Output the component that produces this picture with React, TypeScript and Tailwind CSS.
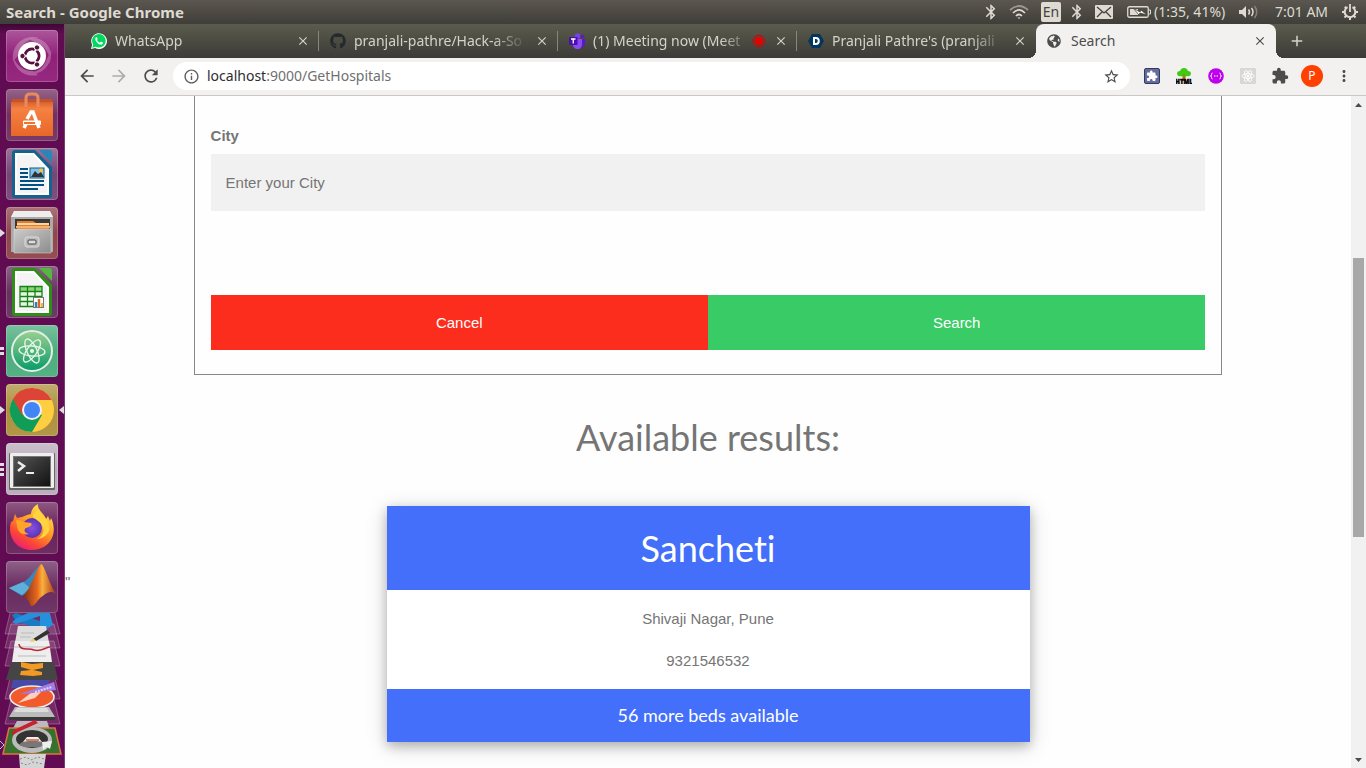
import type { ReactNode } from 'react'
import { FaGithub, FaGlobeAmericas } from 'react-icons/fa'
import {
  MdAdd,
  MdArrowBack,
  MdArrowForward,
  MdBluetooth,
  MdClose,
  MdExtension,
  MdInfoOutline,
  MdMoreVert,
  MdRefresh,
  MdStarBorder,
} from 'react-icons/md'

/* ---------- Tab favicons ---------- */

function WhatsAppIcon() {
  return (
    <svg width="16" height="16" viewBox="0 0 16 16">
      <path d="M0 16l1.1-4.2A7.9 7.9 0 1 1 4.2 15z" fill="#fff" />
      <path d="M1.3 14.7l.9-3.2A6.8 6.8 0 1 1 4.7 13.8z" fill="#00d95f" />
      <path d="M5.4 4.1c-.5.1-1.1.9-1.1 1.8 0 2.4 3.3 5.7 5.8 5.7 1 0 1.8-.6 1.9-1.500l-.1-.5-1.700-.9-.4.1-.8.9c-1.200-.3-2.500-1.500-3-2.700l.6-.8V5.900l-.7-1.700z" fill="#fff" />
    </svg>
  )
}

function TeamsIcon() {
  return (
    <svg width="16" height="16" viewBox="0 0 16 16">
      <circle cx="8.500" cy="3" r="2.700" fill="#7b3ff2" />
      <circle cx="13.500" cy="3.500" r="1.800" fill="#5b18c9" />
      <path d="M11 6h5v5a3 3 0 0 1-4 3z" fill="#5b18c9" />
      <path d="M4 6h9v5.500A4.500 4.500 0 0 1 4 12z" fill="#8a4af5" />
      <rect y="4" width="8.500" height="8" rx="1" fill="#4b0fb0" />
      <path d="M2 6h4.500M4.250 6v4.500" stroke="#fff" strokeWidth="1.300" />
    </svg>
  )
}

function DevfolioIcon() {
  return (
    <svg width="16" height="16" viewBox="0 0 16 16">
      <path d="M4 1h8l4 7-4 7H4L0 8z" fill="#03365c" />
      <path d="M6 5h1.800a3 3 0 0 1 0 6H6z" fill="none" stroke="#fff" strokeWidth="2" />
    </svg>
  )
}

function RecordingDot() {
  return (
    <svg width="14" height="14" viewBox="0 0 14 14" className="shrink-0">
      <circle cx="7" cy="7" r="4.300" fill="#e60000" />
      <circle cx="7" cy="7" r="5.800" fill="none" stroke="#d40000" strokeWidth="1" />
    </svg>
  )
}

const TABS: { title: string; icon: ReactNode; recording?: boolean }[] = [
  { title: 'WhatsApp', icon: <WhatsAppIcon /> },
  { title: 'pranjali-pathre/Hack-a-So', icon: <FaGithub size={16} color="#24292e" /> },
  { title: '(1) Meeting now (Meet', icon: <TeamsIcon />, recording: true },
  { title: "Pranjali Pathre's (pranjali", icon: <DevfolioIcon /> },
]

/* ---------- Launcher icons ---------- */

function DashIcon() {
  return (
    <svg width="52" height="52" viewBox="0 0 52 52">
      <path d="M7 31C5 13 20 4 33 8c-10-1-20 7-21 18M20 8c18-4 30 12 23 26 2-10-4-19-14-22M45 20c2 18-14 29-29 22 10 3 20-2 24-11M32 45C18 48 7 38 7 26c3 9 10 15 20 15" fill="#fff" opacity=".25" />
      <circle cx="26" cy="27" r="14" fill="#4a0d40" opacity=".4" />
      <circle cx="26" cy="26" r="14" fill="#fff" />
      <circle cx="26" cy="26" r="7" fill="none" stroke="#57113f" strokeWidth="3" />
      <path d="M26 26L15 26M26 26l6-10M26 26l6 10" stroke="#fff" strokeWidth="1.500" />
      <circle cx="26" cy="26" r="5.500" fill="#fff" />
      <g fill="#57113f" stroke="#fff">
        <circle cx="16.500" cy="26" r="2.700" />
        <circle cx="31" cy="17.500" r="2.700" />
        <circle cx="31" cy="34.500" r="2.700" />
      </g>
    </svg>
  )
}

function SoftwareIcon() {
  return (
    <svg width="52" height="52" viewBox="0 0 52 52">
      <defs>
        <linearGradient id="bag" x2="0" y2="1">
          <stop stopColor="#d7612f" />
          <stop offset=".2" stopColor="#f58142" />
          <stop offset="1" stopColor="#e96727" />
        </linearGradient>
      </defs>
      <path d="M6 10h40l1 4H5z" fill="#c65227" />
      <path d="M5 13h42v34H5z" fill="url(#bag)" />
      <path d="M20 18V9q0-4 4-4h4q4 0 4 4v9" fill="none" stroke="#e98a5c" strokeWidth="3" />
      <path d="M21 30l4-7h2l6 16M20 35l-2 4" fill="none" stroke="#fff" strokeWidth="3.500" />
      <rect x="17" y="31.500" width="18" height="4.500" rx="1" fill="#fff" />
      <rect x="18" y="33" width="11" height="2" fill="#ee7431" />
    </svg>
  )
}

function DocumentIcon({ edge, light, children }: { edge: string; light: string; children: ReactNode }) {
  return (
    <svg width="52" height="52" viewBox="0 0 52 52">
      <path d="M9 2h20l17 17v28q0 3-3 3H9q-3 0-3-3V5q0-3 3-3z" fill={edge} />
      <path d="M9 5h19l15 16v26H9z" fill="#fff" />
      <path d="M11 7h16l14 15v23H11z" fill="#f4f4f4" />
      <path d="M33 2h10q3 0 3 3v10z" fill={light} />
      {children}
    </svg>
  )
}

function WriterIcon() {
  return (
    <DocumentIcon edge="#17618f" light="#2b86b8">
      <path d="M14 21h8M14 25h8M14 29h8M14 33h24M14 37h24M14 41h18" stroke="#005083" strokeWidth="2" />
      <rect x="24" y="20" width="14" height="10" fill="#83c3eb" stroke="#115987" />
      <circle cx="35" cy="22.500" r="2" fill="#f4c435" />
      <path d="M25 29l4-6 3 3 3-2 3 5z" fill="#333" />
    </DocumentIcon>
  )
}

function CalcIcon() {
  return (
    <DocumentIcon edge="#2f8d18" light="#55b83e">
      <path d="M14 20h22v21H14z" fill="#e9f8e3" />
      <path d="M14 20h22v6H14z" fill="#8dd477" />
      <path d="M14 20.500h22v20H14zM14 25.500h22M14 30.500h22M14 35.500h22M21.500 20v21M29 20v21" fill="none" stroke="#15821a" strokeWidth="1.300" />
      <rect x="27.500" y="31.500" width="10" height="10" fill="#fff" stroke="#777" />
      <path d="M30 41v-5" stroke="#2a82bd" strokeWidth="2.500" />
      <path d="M33 41v-8" stroke="#df6229" strokeWidth="2.500" />
      <path d="M36 41v-4" stroke="#eebb2b" strokeWidth="2" />
    </DocumentIcon>
  )
}

function FilesIcon() {
  return (
    <svg width="52" height="52" viewBox="0 0 52 52">
      <defs>
        <linearGradient id="cabinet" x2="1" y2="1">
          <stop stopColor="#ccc" />
          <stop offset="1" stopColor="#8c8c8c" />
        </linearGradient>
      </defs>
      <path d="M8 4h36l3 6v35H5V10z" fill="#aaa" />
      <path d="M8 4h36l3 6H5z" fill="#eee" />
      <path d="M9 12h35v12H9z" fill="#3d3833" />
      <path d="M11 14h16l3 2h13v7H11z" fill="#e67b25" />
      <path d="M11 17h32" stroke="#fff2d5" strokeWidth="1.500" />
      <path d="M10 20h34" stroke="#f4b16d" strokeWidth="2" />
      <path d="M8 22h37v24H8z" fill="url(#cabinet)" stroke="#ddd" strokeWidth=".5" />
      <rect x="19" y="30" width="14" height="10" rx="2" fill="#bbb" stroke="#ddd" />
      <rect x="22" y="33" width="8" height="4" rx="1" fill="#ddd" stroke="#444" />
    </svg>
  )
}

function AtomIcon() {
  return (
    <svg width="52" height="52" viewBox="0 0 52 52">
      <defs>
        <linearGradient id="atom" x2="0" y2="1">
          <stop stopColor="#9bcf91" />
          <stop offset="1" stopColor="#089b68" />
        </linearGradient>
      </defs>
      <circle cx="26" cy="26" r="20" fill="url(#atom)" stroke="#e0eee5" strokeWidth="2" />
      <g fill="none" stroke="#e8f6e9" strokeWidth="1.300">
        <ellipse cx="26" cy="26" rx="5" ry="13" transform="rotate(-25 26 26)" />
        <ellipse cx="26" cy="26" rx="5" ry="13" transform="rotate(35 26 26)" />
        <ellipse cx="26" cy="26" rx="5" ry="13" transform="rotate(95 26 26)" />
      </g>
      <circle cx="26" cy="26" r="2" fill="#e8f6e9" />
    </svg>
  )
}

function ChromeIcon() {
  return (
    <svg width="52" height="52" viewBox="0 0 52 52">
      <circle cx="26" cy="26" r="22" fill="#ffcd40" />
      <path d="M26 26L7 14.800A22 22 0 0 0 26 48L36 31z" fill="#0f9d58" />
      <path d="M26 26L16 31 7 14.800A22 22 0 0 1 45.500 16H26z" fill="#db4437" />
      <circle cx="26" cy="26" r="10" fill="#f1f1f1" />
      <circle cx="26" cy="26" r="8" fill="#4285f4" />
    </svg>
  )
}

function TerminalIcon() {
  return (
    <svg width="52" height="52" viewBox="0 0 52 52">
      <defs>
        <linearGradient id="screen" x2="1" y2="1">
          <stop stopColor="#555" />
          <stop offset="1" stopColor="#111" />
        </linearGradient>
      </defs>
      <rect x="3" y="10" width="46" height="37" rx="1" fill="#666" />
      <rect x="4" y="10" width="44" height="35" rx="1" fill="#eee" />
      <rect x="7.500" y="13.500" width="37" height="30" fill="url(#screen)" stroke="#777" />
      <path d="M12 19l6 4-6 5" fill="none" stroke="#eee" strokeWidth="2.500" />
      <path d="M20 30h8" stroke="#eee" strokeWidth="2" />
    </svg>
  )
}

function FirefoxIcon() {
  return (
    <svg width="52" height="52" viewBox="0 0 52 52">
      <defs>
        <linearGradient id="fire" x1=".8" y1="0" x2=".2" y2="1">
          <stop stopColor="#ffef54" />
          <stop offset=".45" stopColor="#ff9a25" />
          <stop offset=".75" stopColor="#fb4637" />
          <stop offset="1" stopColor="#ea1683" />
        </linearGradient>
        <radialGradient id="globe">
          <stop stopColor="#8750e8" />
          <stop offset="1" stopColor="#5b34ae" />
        </radialGradient>
      </defs>
      <path d="M9 12l2 4 5-1 5-2 4-1c0-4 3-8 7-10-1 6 6 9 8 15l2-3 2 5 1-3c8 16-2 32-19 32S1 33 5 20l2-1z" fill="url(#fire)" />
      <circle cx="26" cy="26" r="10" fill="url(#globe)" />
      <path d="M10 18c5 0 6 1 8 2l7 1c2 2-1 4-5 5-3 2-1 5 3 6-7 2-12-3-12-8z" fill="#ffa52a" />
      <path d="M27 12c-2 5 8 6 10 13 2 6-2 10-6 12 12-1 16-12 9-20-2-4-7-6-7-10z" fill="#ffd43e" />
    </svg>
  )
}

function MatlabIcon() {
  return (
    <svg width="52" height="52" viewBox="0 0 52 52">
      <defs>
        <linearGradient id="peak">
          <stop stopColor="#762515" />
          <stop offset=".45" stopColor="#e8691f" />
          <stop offset=".6" stopColor="#f9b13c" />
          <stop offset="1" stopColor="#a6321b" />
        </linearGradient>
      </defs>
      <path d="M3 27l14-6c6-2 10-11 16-16l-9 26-8 4z" fill="#3986bc" />
      <path d="M3 27l13 7 8-7-7-6z" fill="#5eb0da" />
      <path d="M35 3c3 0 8 19 15 30-6-5-11 0-16 4-3 3-5 8-9 8-2-5-5-9-9-10 8-3 14-28 19-32z" fill="url(#peak)" />
    </svg>
  )
}

/* Folded icons at the bottom of the launcher */
function FoldedStack() {
  return (
    <svg width="64" height="160" viewBox="0 0 64 160" className="block">
      <g fill="#fff" fillOpacity=".12" stroke="#fff" strokeOpacity=".25">
        <path d="M11 1h43l6 25H5z" />
        <path d="M11 16h43l6 24H5z" />
        <path d="M11 33h43l6 25H5z" />
        <path d="M11 66h43l6 25H5z" />
        <path d="M11 91h43l6 25H5z" />
      </g>
      <path d="M12 7l4-2 27 9 9 1-7 6-9-1-20-7z" fill="#187bc3" />
      <path d="M37 1l12 1 4 15-10 6-3-5V8L16 16l-4-2 5-4z" fill="#2590db" />
      <path d="M18 18h28l4 22H14z" fill="#ddd" />
      <path d="M15 33h34l3 21H12z" fill="#eee" />
      <path d="M14 39h36" stroke="#bbb" />
      <path d="M21 25h13M20 29h11M18 48h28" stroke="#bbb" />
      <path d="M19 36c1 8 10 3 15 6 7 2 12-3 16-3" fill="none" stroke="#bf2534" strokeWidth="1.500" />
      <path d="M33 31l14-9 3 3-14 8z" fill="#333" />
      <path d="M30 34l3-4 3 3z" fill="#e2d16a" />
      <path d="M11 54h43l4 18H6z" fill="#454545" />
      <path d="M21 54l11 2 11-1v5l-10 2 9 2v3l-9 1-13-1 1-4 10-1-10-3z" fill="#f39a24" />
      <path d="M13 72h37l-3 8H11z" fill="#474aa7" />
      <ellipse cx="32" cy="89" rx="22" ry="11" fill="#f15a2b" stroke="#eee" strokeWidth="1.500" />
      <path d="M18 95l14-11 16-7-13 13z" fill="#ffd1bc" />
      <path d="M20 86l34-12 2 8-31 4z" fill="#a07de0" />
      <path d="M35 84l17-5" stroke="#e2d5ff" strokeWidth="2" strokeDasharray="2 1" />
      <path d="M15 99h34l6 10H9z" fill="#bbb" />
      <path d="M17 100h30l2 4H14z" fill="#ddd" />
      <path d="M9 109h46v3H9z" fill="#383838" />
      <path d="M17 113h30l3 9H12z" fill="#bbb" />
      <path d="M9 120h46l6 26H3z" fill="#37712f" stroke="#df7140" strokeWidth="1.500" />
      <ellipse cx="32" cy="132" rx="20" ry="13" fill="#bbb" />
      <ellipse cx="32" cy="131" rx="16" ry="9" fill="#333" />
      <path d="M19 137a14 8 0 0 1 26 0l-6 2H24z" fill="#777" />
      <path d="M23 134l4-5h11l4 5-5-1h-9z" fill="#eee" />
      <path d="M26 132h13" stroke="#d65a28" strokeWidth="1.500" />
      <path d="M42 134l10-1-2 8-3-2-4 3z" fill="#eee" />
      <path d="M11 125l5-4 19-9 3 3-20 9-5 3z" fill="#c4222c" />
      <path d="M19 146h27l-2 14H20z" fill="#d5d5d5" />
      <path d="M20 151l6-2 5 3 7-3 6 2M21 155l6 2 6-3 10 2" fill="none" stroke="#888" strokeDasharray="2 2" />
      <path d="M0 133l4 4-4 4" fill="none" stroke="#9dcfee" />
    </svg>
  )
}

const LAUNCHER = [
  { name: 'Search your computer', icon: <DashIcon />, tile: 'bg-[#911f79]', windows: 0 },
  { name: 'Ubuntu Software', icon: <SoftwareIcon />, tile: 'bg-[#713061]', windows: 0 },
  { name: 'LibreOffice Writer', icon: <WriterIcon />, tile: 'bg-[#754777]', windows: 0 },
  { name: 'Files', icon: <FilesIcon />, tile: 'bg-[#8f454b]', windows: 1 },
  { name: 'LibreOffice Calc', icon: <CalcIcon />, tile: 'bg-[#65315f]', windows: 0 },
  { name: 'Atom', icon: <AtomIcon />, tile: 'bg-[#4dac7e]', windows: 2 },
  { name: 'Google Chrome', icon: <ChromeIcon />, tile: 'bg-[#ae913e]', windows: 1, focused: true },
  { name: 'Terminal', icon: <TerminalIcon />, tile: 'bg-[#b8abb9]', windows: 3 },
  { name: 'Firefox', icon: <FirefoxIcon />, tile: 'bg-[#692259]', windows: 0 },
  { name: 'MATLAB', icon: <MatlabIcon />, tile: 'bg-[#692c60]', windows: 0 },
]

function WindowMarks({ count }: { count: number }) {
  return (
    <svg width="5" height="14" viewBox="0 0 5 14" className="absolute top-[19px] left-0" fill="#ddd">
      {count === 1 && <path d="M0 3l5 4-5 4z" />}
      {count === 2 && <path d="M0 3h4v3H0zM0 8h4v3H0z" />}
      {count === 3 && <path d="M0 1h4v3H0zM0 6h4v3H0zM0 11h4v3H0z" />}
    </svg>
  )
}

function Launcher() {
  return (
    <nav className="w-[65px] shrink-0 overflow-hidden border-r border-[#7d3b72] bg-[#610c52] bg-linear-to-b from-[#3e0735] to-[#610c52] to-[10px] pt-[6px]">
      <ul className="flex flex-col gap-[7px]">
        {LAUNCHER.map((app) => (
          <li key={app.name} className="relative flex justify-center">
            <WindowMarks count={app.windows} />
            <button
              aria-label={app.name}
              className={`size-[52px] rounded-sm bg-linear-to-b from-white/25 via-white/0 to-white/5 shadow-[inset_0_0_0_1px_rgba(255,255,255,0.2)] ${app.tile}`}
            >
              {app.icon}
            </button>
            {app.focused && (
              <svg width="5" height="8" viewBox="0 0 5 8" className="absolute top-[22px] right-0" fill="#ddd">
                <path d="M5 0L0 4l5 4z" />
              </svg>
            )}
          </li>
        ))}
      </ul>
      <div className="-mt-[5px]">
        <FoldedStack />
      </div>
    </nav>
  )
}

/* ---------- Top panel ---------- */

function WifiIcon() {
  return (
    <svg width="20" height="16" viewBox="0 0 20 16" fill="none" strokeWidth="1.700">
      <path d="M1 6q9-8 18 0" stroke="#9b9990" />
      <path d="M4 9q6-6 12 0" stroke="#dfdbd2" />
      <path d="M7 12q3-3 6 0" stroke="#dfdbd2" />
      <path d="M8.500 13.500h3L10 15z" fill="#dfdbd2" />
    </svg>
  )
}

function MailIcon() {
  return (
    <svg width="18" height="14" viewBox="0 0 18 14">
      <rect width="18" height="14" rx="1" fill="#dfdbd2" />
      <path d="M2 2l7 6 7-6M2 12l5-5M16 12l-5-5" fill="none" stroke="#45433e" strokeWidth="1.300" />
    </svg>
  )
}

function BatteryIcon() {
  return (
    <svg width="24" height="14" viewBox="0 0 24 14">
      <rect x=".75" y="1.750" width="20.500" height="10.500" rx="1.500" fill="none" stroke="#dfdbd2" strokeWidth="1.300" />
      <rect x="3" y="4" width="8" height="6" fill="#dfdbd2" />
      <path d="M22 5h1.500v4H22" fill="none" stroke="#dfdbd2" />
      <path d="M6 3l7 4 1-2 6 5-7-2-1 2z" fill="#fff" stroke="#45433e" strokeWidth=".8" />
    </svg>
  )
}

function VolumeIcon() {
  return (
    <svg width="20" height="14" viewBox="0 0 20 14" fill="none" strokeWidth="1.500">
      <path d="M0 5h3l4-4v12L3 9H0z" fill="#dfdbd2" />
      <path d="M9.500 4.500q2 2.500 0 5M12.500 3q3 4 0 8" stroke="#dfdbd2" />
      <path d="M15.500 1q4.500 6 0 12" stroke="#85837a" />
    </svg>
  )
}

function GearIcon() {
  return (
    <svg width="18" height="18" viewBox="0 0 18 18" fill="none" stroke="#dfdbd2">
      <path d="M6.500 4.200a5.300 5.300 0 1 0 5 0" strokeWidth="2" />
      <path d="M9 1v8" strokeWidth="1.800" />
      <path d="M3.800 3.800l1.500 1.500M14.200 3.800l-1.500 1.500M1 9h3M14 9h3M3.500 14.500l2-2M14.500 14.500l-2-2M9 14v3" strokeWidth="2" />
    </svg>
  )
}

function TopPanel() {
  return (
    <header className="flex h-6 shrink-0 items-center justify-between bg-linear-to-b from-[#5b5750] to-[#403e39] pr-[7px] pl-[6px] text-[14px] leading-[22px] text-[#dfdbd2]">
      <span className="text-[15px] font-bold">Search - Google Chrome</span>
      <div className="flex items-center">
        <MdBluetooth size={18} className="mr-[9px]" />
        <WifiIcon />
        <span className="mr-[7px] ml-3 flex h-5 w-5 items-center justify-center rounded-xs bg-[#dfdbd2] text-[#45433e]">En</span>
        <MdBluetooth size={18} className="mr-[9px]" />
        <MailIcon />
        <span className="ml-[14px] flex w-[100px] items-center gap-[3px] whitespace-nowrap">
          <BatteryIcon />
          (1:35, 41%)
        </span>
        <span className="ml-3 w-[36px]">
          <VolumeIcon />
        </span>
        <span className="w-[66px] whitespace-nowrap">7:01 AM</span>
        <GearIcon />
      </div>
    </header>
  )
}

/* ---------- Browser chrome ---------- */

function TabStrip() {
  return (
    <div className="flex h-[34px] shrink-0 bg-linear-to-b from-[#5b5c4e] to-[#3c3b37] pl-[15px] text-[14px] leading-5 text-[#d5d3c9]">
      {TABS.map((tab, i) => (
        <div key={tab.title} className="flex w-[239px] min-w-0 items-center pl-[11px]">
          <span className="mr-2 shrink-0">{tab.icon}</span>
          <span className="min-w-0 flex-1 overflow-hidden mask-r-from-80% whitespace-nowrap">{tab.title}</span>
          {tab.recording && <RecordingDot />}
          <button aria-label={`Close ${tab.title}`} className="ml-2 shrink-0">
            <MdClose size={14} />
          </button>
          <span className={`ml-2 h-5 w-px shrink-0 ${i < 3 ? 'bg-[#86867a]' : ''}`} />
        </div>
      ))}
      <div className="relative flex w-[240px] min-w-0 items-center rounded-t-lg bg-[#f2f1f0] pr-[9px] pl-[11px] text-[#4c4c4c]">
        <span className="absolute bottom-0 -left-2 size-2 bg-[radial-gradient(circle_at_0_0,transparent_8px,#f2f1f0_8px)]" />
        <span className="absolute -right-2 bottom-0 size-2 bg-[radial-gradient(circle_at_100%_0,transparent_8px,#f2f1f0_8px)]" />
        <FaGlobeAmericas size={14} className="mr-[10px] shrink-0" />
        <span className="flex-1">Search</span>
        <button aria-label="Close Search">
          <MdClose size={14} />
        </button>
      </div>
      <button aria-label="New tab" className="ml-3">
        <MdAdd size={18} />
      </button>
    </div>
  )
}

function PuzzleBadge() {
  return (
    <span className="flex size-4 items-center justify-center rounded-xs border border-[#323965] bg-[#666d9a] text-white">
      <MdExtension size={12} />
    </span>
  )
}

function HtmlTreeIcon() {
  return (
    <svg width="16" height="16" viewBox="0 0 16 16">
      <path d="M7 7h2l1 6H6z" fill="#a55b18" />
      <path d="M1 6q0-3 3-3 1-3 4-3t4 3q3 0 3 3-1 3-4 2-3 2-6 0-3 1-4-2z" fill="#3ecb12" />
      <path d="M8 6v6" stroke="#c66a17" strokeWidth="1.500" />
      <text x="8" y="16" textAnchor="middle" fontSize="6" fontWeight="900" fill="#000" stroke="#000" strokeWidth=".4">
        HTML
      </text>
    </svg>
  )
}

function BracesIcon() {
  return (
    <svg width="16" height="16" viewBox="0 0 16 16">
      <circle cx="8" cy="8" r="7.800" fill="#bd00ed" />
      <path d="M4.500 5q-1 0-1 1.500T2.500 8q1 0 1 1.500t1 1.500M11.500 5q1 0 1 1.500t1 1.500q-1 0-1 1.500t-1 1.500M6 8h1M9 8h1M7.500 8h1" fill="none" stroke="#fff" />
    </svg>
  )
}

function ReactBadge() {
  return (
    <svg width="16" height="16" viewBox="0 0 16 16">
      <rect width="16" height="16" rx="1" fill="#d7d7d6" />
      <g fill="none" stroke="#fff" strokeWidth=".9">
        <ellipse cx="8" cy="8" rx="6" ry="2.300" />
        <ellipse cx="8" cy="8" rx="6" ry="2.300" transform="rotate(60 8 8)" />
        <ellipse cx="8" cy="8" rx="6" ry="2.300" transform="rotate(120 8 8)" />
      </g>
      <circle cx="8" cy="8" r="1.200" fill="#fff" />
    </svg>
  )
}

function ToolButton({ label, children }: { label: string; children: ReactNode }) {
  return (
    <button aria-label={label} className="flex size-8 shrink-0 items-center justify-center">
      {children}
    </button>
  )
}

function Toolbar() {
  return (
    <div className="flex h-[38px] shrink-0 items-center border-b border-[#cbc9c7] bg-[#f2f1f0] px-[6px] pb-px text-[#4c4c4c]">
      <ToolButton label="Back"><MdArrowBack size={20} /></ToolButton>
      <ToolButton label="Forward"><MdArrowForward size={20} color="#aeadac" /></ToolButton>
      <ToolButton label="Reload"><MdRefresh size={20} /></ToolButton>
      <div className="mx-[6px] flex h-7 flex-1 items-center rounded-full bg-white px-[10px]">
        <MdInfoOutline size={17} color="#5f5f5f" />
        <div className="relative ml-[7px] flex-1 text-[14px] leading-5">
          <input
            aria-label="Address"
            defaultValue="localhost:9000/GetHospitals"
            className="block w-full text-transparent caret-black outline-none"
          />
          {/* host is drawn darker than the path */}
          <span aria-hidden className="pointer-events-none absolute inset-0 flex items-center text-[#707070]">
            <span className="text-[#2e2e2e]">localhost</span>:9000/GetHospitals
          </span>
        </div>
        <button aria-label="Bookmark this page"><MdStarBorder size={17} /></button>
      </div>
      <ToolButton label="Puzzle extension"><PuzzleBadge /></ToolButton>
      <ToolButton label="HTML tree"><HtmlTreeIcon /></ToolButton>
      <ToolButton label="JSON viewer"><BracesIcon /></ToolButton>
      <ToolButton label="React tools"><ReactBadge /></ToolButton>
      <ToolButton label="Extensions"><MdExtension size={18} /></ToolButton>
      <ToolButton label="Profile">
        <span className="flex size-[22px] items-center justify-center rounded-full bg-[#ff4000] text-[12px] text-white">P</span>
      </ToolButton>
      <ToolButton label="Menu"><MdMoreVert size={18} /></ToolButton>
    </div>
  )
}

function Scrollbar() {
  return (
    <div className="flex w-[15px] shrink-0 flex-col bg-[#f1f1f1] px-[2px]">
      <div className="flex h-[17px] items-center justify-center">
        <svg width="7" height="4" fill="#4c4c4c"><path d="M0 4l3.500-4L7 4z" /></svg>
      </div>
      <div className="flex-[145]" />
      <div className="flex-[279] bg-[#a8a8a8]" />
      <div className="flex-[214]" />
      <div className="flex h-[17px] items-center justify-center">
        <svg width="7" height="4" fill="#4c4c4c"><path d="M0 0h7L3.500 4z" /></svg>
      </div>
    </div>
  )
}

/* ---------- Page ---------- */

function SearchForm() {
  return (
    <form className="mx-auto w-4/5 border border-t-0 border-[#888] px-4 pt-[29px] pb-6" onSubmit={(e) => e.preventDefault()}>
      <label htmlFor="city" className="block leading-[22px] font-bold">City</label>
      <input
        id="city"
        type="text"
        placeholder="Enter your City"
        className="mt-[7px] block h-[57px] w-full bg-[#f1f1f1] px-[15px] placeholder:text-[#757575]"
      />
      <div className="mt-[84px] flex text-white">
        <button type="button" className="h-[55px] flex-1 bg-[#fc2d1c] pt-px">Cancel</button>
        <button type="submit" className="h-[55px] flex-1 bg-[#38cb66] pt-px">Search</button>
      </div>
    </form>
  )
}

function HospitalCard() {
  return (
    <article className="bg-white text-center shadow-[0_4px_10px_0_rgba(0,0,0,0.2),0_4px_20px_0_rgba(0,0,0,0.19)]">
      <h1 className="bg-[#436ffa] py-[15px] font-[Lato,sans-serif] text-[36px] leading-[54px] text-white [font-variant-ligatures:none]">Sancheti</h1>
      <div className="flex flex-col gap-5 pt-[18px] pb-[17px] leading-[22px]">
        <p>Shivaji Nagar, Pune</p>
        <p>9321546532</p>
      </div>
      <h5 className="bg-[#436ffa] py-[13px] font-[Lato,sans-serif] text-[18px] leading-[27px] text-white">56 more beds available</h5>
    </article>
  )
}

export default function App() {
  return (
    <div className="flex h-screen flex-col overflow-hidden font-['Noto_Sans',sans-serif]">
      <TopPanel />
      <div className="flex min-h-0 flex-1">
        <Launcher />
        <div className="flex min-w-0 flex-1 flex-col">
          <TabStrip />
          <Toolbar />
          <div className="flex min-h-0 flex-1">
            <main className="min-w-0 flex-1 overflow-hidden bg-[#fefefe] font-['Liberation_Sans',Arial,sans-serif] text-[15px] text-[#757575]">
              <SearchForm />
              <h1 className="mt-[35px] mb-[42px] text-center font-[Lato,sans-serif] text-[36px] leading-[54px]">Available results:</h1>
              <div className="grid grid-cols-[1fr_2fr_1fr]">
                <span className="mt-[65px]">"</span>
                <HospitalCard />
              </div>
            </main>
            <Scrollbar />
          </div>
        </div>
      </div>
    </div>
  )
}
